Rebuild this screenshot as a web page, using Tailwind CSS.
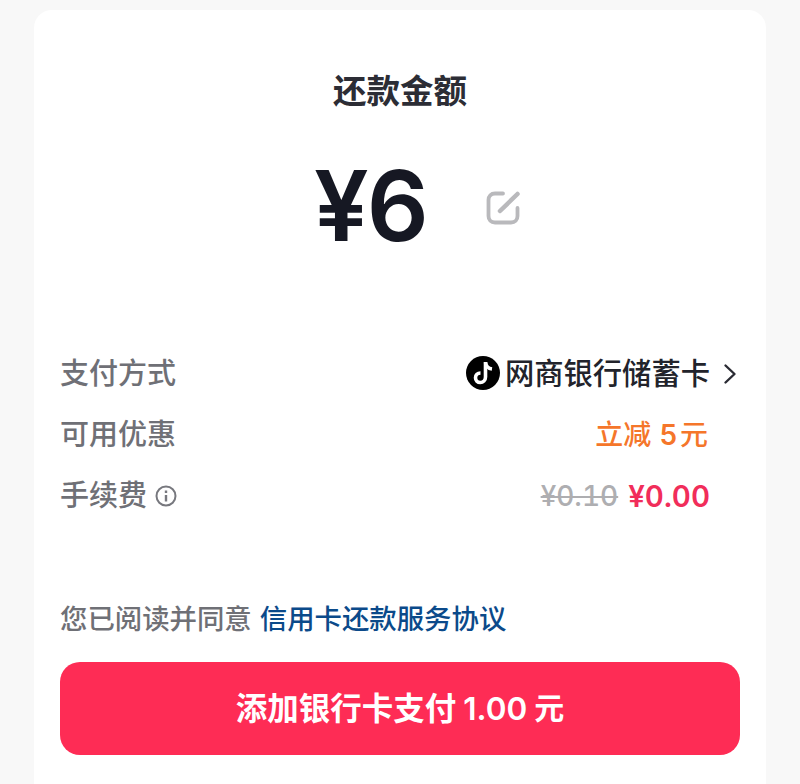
<!DOCTYPE html>
<html lang="zh-CN">

<head>
    <meta charset="UTF-8">
    <meta name="viewport" content="width=device-width, initial-scale=1.0">
    <title>还款金额</title>
    <script src="https://cdn.jsdelivr.net/npm/@tailwindcss/browser@4"></script>
</head>

<body class="h-[784px] overflow-hidden bg-[#f8f8f8] font-['Inter','Noto_Sans_CJK_SC',sans-serif]">
    <div class="mx-[34px] mt-[10px] h-[774px] rounded-t-[18px] bg-white px-[26px]">

        <h1 class="pt-[57px] text-center text-[33.500px] leading-[48px] font-semibold text-[#2c2d35]">还款金额</h1>

        <!-- amount -->
        <div class="mt-[31px] flex h-[120px] items-center pl-[254px]">
            <div class="text-[97px] leading-[120px] font-semibold tracking-[-2px] text-[#161823]">¥6</div>
            <svg class="ml-[58px] mt-[4px]" width="36" height="36" viewBox="0 0 36 36" fill="none" stroke="#b9b9bc" stroke-width="3.800" stroke-linecap="round" stroke-linejoin="round">
                <path d="M18 3.500H10C6 3.500 3.500 6 3.500 10V26C3.500 30 6 32.500 10 32.500H26C30 32.500 32.500 30 32.500 26V18" />
                <path d="M15 21L32.500 4" stroke-width="4.500" />
            </svg>
        </div>

        <!-- rows -->
        <div class="mt-[77px] flex h-[61px] items-center justify-between">
            <span class="text-[29px] font-medium text-[#6f7076]">支付方式</span>
            <div class="mr-[6px] flex items-center">
                <svg class="mt-[-1px]" width="34" height="34" viewBox="0 0 34 34">
                    <circle cx="17" cy="17" r="17" fill="#000" />
                    <path d="M19.500 6V21C19.500 24.500 17 26.500 14.300 26.500C11.500 26.500 9.500 24.500 9.500 21.700C9.500 19 11.500 17 14.500 17" fill="none" stroke="#fff" stroke-width="3.600" />
                    <path d="M19.500 6.500C20 10 22.500 12.500 26 13" fill="none" stroke="#fff" stroke-width="3.600" />
                </svg>
                <span class="ml-[5px] text-[29.300px] leading-[40px] font-medium text-[#22232b]">网商银行储蓄卡</span>
                <svg class="ml-[13px] mr-[-3px]" width="14" height="22" viewBox="0 0 14 22" fill="none" stroke="#2a2b33" stroke-width="2.400" stroke-linecap="round" stroke-linejoin="round">
                    <path d="M2.500 2.500L11.500 11L2.500 19.500" />
                </svg>
            </div>
        </div>

        <div class="flex h-[61px] items-center justify-between">
            <span class="text-[29px] font-medium text-[#6f7076]">可用优惠</span>
            <div class="mr-[32px] flex items-center text-[28px] font-medium text-[#f5762a]">
                <span>立减</span>
                <span class="ml-[8px] font-semibold">5</span>
                <span class="ml-[3px]">元</span>
            </div>
        </div>

        <div class="flex h-[62px] items-center justify-between">
            <div class="flex items-center">
                <span class="text-[29px] font-medium text-[#6f7076]">手续费</span>
                <svg class="ml-[8px]" width="22" height="22" viewBox="0 0 22 22" fill="none" stroke="#77787e" stroke-width="2">
                    <circle cx="11" cy="11" r="9.500" />
                    <path d="M11 10V16.500" stroke-width="2.400" />
                    <path d="M11 5.500V8" stroke-width="2.400" />
                </svg>
            </div>
            <div class="mr-[30px] flex items-center tabular-nums">
                <span class="text-[28px] font-medium text-[#aeaeb1] line-through">¥0.10</span>
                <span class="ml-[10px] text-[29.500px] font-semibold text-[#f12d5a]">¥0.00</span>
            </div>
        </div>

        <!-- agreement -->
        <div class="mt-[72px] flex gap-[8px] text-[27.400px] leading-[40px] font-medium text-[#6f7076]">
            <span>您已阅读并同意</span>
            <span class="text-[#0b4a8a]">信用卡还款服务协议</span>
        </div>

        <button class="mt-[23px] flex h-[93px] w-full items-center justify-center gap-[7px] rounded-[20px] bg-[#fe2c55] text-[31.500px] font-semibold text-white">
            <span>添加银行卡支付</span>
            <span>1.00</span>
            <span class="text-[30px]">元</span>
        </button>
    </div>
</body>

</html>
